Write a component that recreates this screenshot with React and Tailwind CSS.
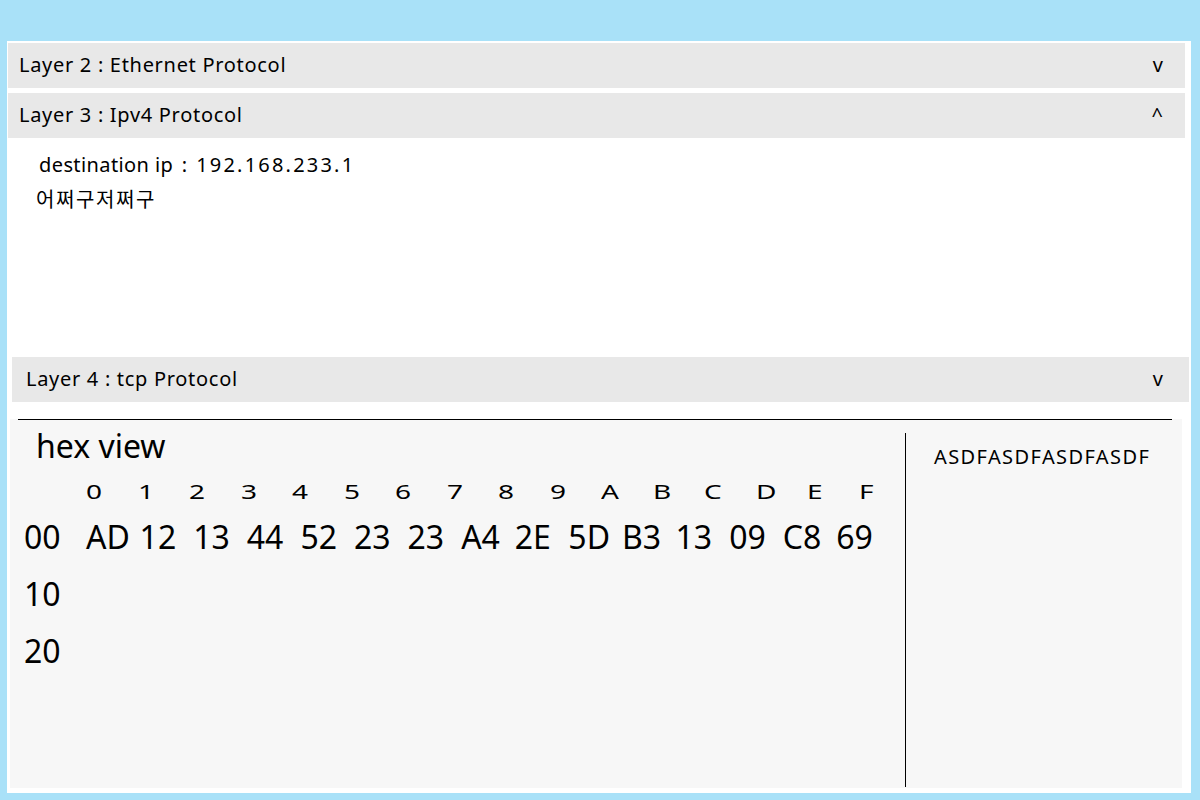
const cols = ["0", "1", "2", "3", "4", "5", "6", "7", "8", "9", "A", "B", "C", "D", "E", "F"];
const rows = [
  { label: "00", bytes: ["AD", "12", "13", "44", "52", "23", "23", "A4", "2E", "5D", "B3", "13", "09", "C8", "69"] },
  { label: "10", bytes: [] },
  { label: "20", bytes: [] },
];

function LayerHeader({ title, open, className }) {
  return (
    <div className={`flex h-[45px] shrink-0 items-center justify-between bg-[#e8e8e8] pl-[11px] pr-[22px] text-[20px] leading-[28px] text-black ${className}`}>
      <span className="-mt-[2px] tracking-[0.7px]">{title}</span>
      <span className="-mt-[2px] text-[20px]">{open ? "^" : "v"}</span>
    </div>
  );
}

export default function App() {
  return (
    <div className="h-[800px] bg-[#a9e1f8] pb-[7px] pl-[7px] pr-[9px] pt-[41px] font-['Noto_Sans','Noto_Sans_CJK_KR',sans-serif]">
      <div className="flex h-full flex-col bg-white pb-[5px] pt-[2px]">
        <LayerHeader title="Layer 2 : Ethernet Protocol" className="ml-[1px] mr-[6px] h-[44px]" />
        <LayerHeader title="Layer 3 : Ipv4 Protocol" open className="ml-[1px] mr-[6px] mt-[5px]" />
        <div className="h-[219px] shrink-0 pt-[10px] text-[20px] leading-[34px] text-black">
          <p className="pl-[32px] tracking-[0.4px]">
            destination ip <span className="px-[3px]">:</span> <span className="tracking-[2.2px]">192.168.233.1</span>
          </p>
          <p className="pl-[29px] font-['Noto_Sans_CJK_KR',sans-serif] tracking-[1.6px]">어쩌구저쩌구</p>
        </div>
        <LayerHeader title="Layer 4 : tcp Protocol" className="ml-[5px] mr-[2px] pl-[14px] pr-[26px]" />

        <section className="ml-[3px] mr-[9px] mt-[17px] flex flex-1 flex-col bg-[#f7f7f7]">
          <div className="ml-[8px] mr-[10px] h-px shrink-0 bg-black" />
          <div className="flex flex-1">
            <div className="w-[895px] pl-[14px] text-black">
              <h2 className="ml-[12px] mt-[6px] h-[40px] text-[32px] leading-[40px]">hex view</h2>
              <div className="mt-[11px] flex h-[30px] items-center pl-[62px] text-[20px]">
                {cols.map((c) => (
                  <span key={c} className="w-[51.5px] shrink-0">
                    <span className="inline-block origin-left scale-x-140">{c}</span>
                  </span>
                ))}
              </div>
              <div className="mt-[1px]">
                {rows.map((r) => (
                  <div key={r.label} className="flex h-[57px] items-center text-[32px]">
                    <span className="w-[62px] shrink-0">{r.label}</span>
                    {r.bytes.map((b, i) => (
                      <span key={i} className="w-[53.6px] shrink-0">{b}</span>
                    ))}
                  </div>
                ))}
              </div>
            </div>
            <div className="mb-[1px] mt-[13px] w-px bg-black" />
            <div className="flex-1 pl-[28px] pt-[23px]">
              <p className="text-[20px] leading-[28px] tracking-[1.4px] text-black">ASDFASDFASDFASDF</p>
            </div>
          </div>
        </section>
      </div>
    </div>
  );
}
